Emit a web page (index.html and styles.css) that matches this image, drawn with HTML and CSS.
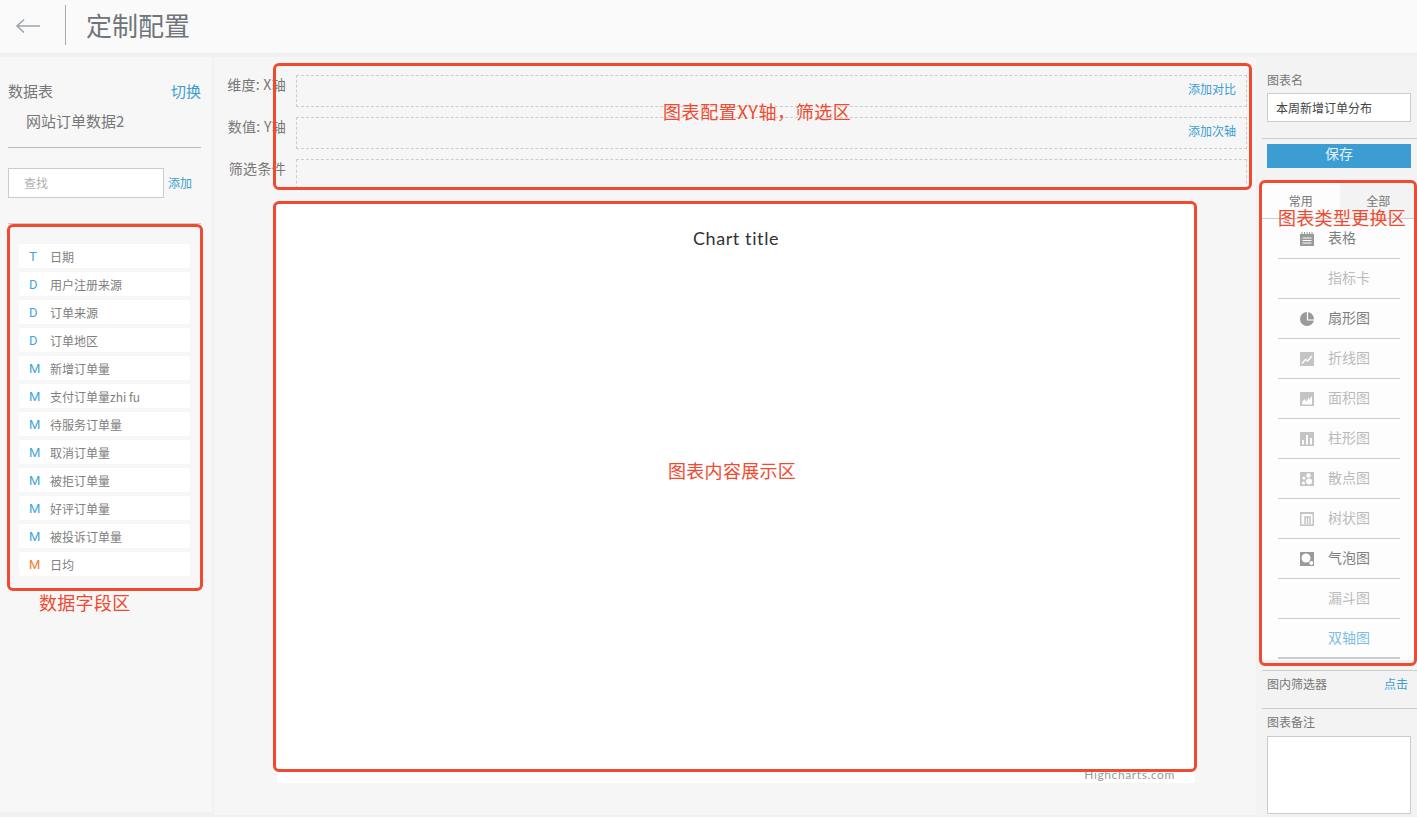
FILE: index.html
```html
<!DOCTYPE html>
<html lang="zh">
<head>
  <meta charset="utf-8">
  <title>定制配置</title>
  <link rel="stylesheet" href="styles.css">
</head>
<body>
  <header class="top-bar">
    <svg class="back-icon" width="26" height="16" viewBox="0 0 26 16"><path d="M25 8H2M9 1.500L2 8l7 6.500" fill="none" stroke="#9ba6ac" stroke-width="1.6"/></svg>
    <div class="top-divider"></div>
    <h1 class="page-title">定制配置</h1>
  </header>

  <div class="layout">
    <aside class="left-panel">
      <div class="table-head">
        <span>数据表</span>
        <a class="link switch-link">切换</a>
      </div>
      <div class="table-name">网站订单数据2</div>
      <div class="search-row">
        <div class="search-box">查找</div>
        <a class="link add-link">添加</a>
      </div>
      <ul class="field-list">
        <li class="field-item"><span class="field-type">T</span><span>日期</span></li>
        <li class="field-item"><span class="field-type">D</span><span>用户注册来源</span></li>
        <li class="field-item"><span class="field-type">D</span><span>订单来源</span></li>
        <li class="field-item"><span class="field-type">D</span><span>订单地区</span></li>
        <li class="field-item"><span class="field-type">M</span><span>新增订单量</span></li>
        <li class="field-item"><span class="field-type">M</span><span>支付订单量zhi fu</span></li>
        <li class="field-item"><span class="field-type">M</span><span>待服务订单量</span></li>
        <li class="field-item"><span class="field-type">M</span><span>取消订单量</span></li>
        <li class="field-item"><span class="field-type">M</span><span>被拒订单量</span></li>
        <li class="field-item"><span class="field-type">M</span><span>好评订单量</span></li>
        <li class="field-item"><span class="field-type">M</span><span>被投诉订单量</span></li>
        <li class="field-item"><span class="field-type field-type--calc">M</span><span>日均</span></li>
      </ul>
    </aside>

    <main class="center-panel">
      <div class="axis-row">
        <label class="axis-label">维度: X轴</label>
        <div class="drop-box"><a class="link drop-link">添加对比</a></div>
      </div>
      <div class="axis-row">
        <label class="axis-label">数值: Y轴</label>
        <div class="drop-box"><a class="link drop-link">添加次轴</a></div>
      </div>
      <div class="axis-row">
        <label class="axis-label">筛选条件</label>
        <div class="drop-box drop-box--short"></div>
      </div>
      <section class="chart-card">
        <div class="chart-title">Chart title</div>
        <div class="chart-credit">Highcharts.com</div>
      </section>
    </main>

    <aside class="right-panel">
      <div class="name-block">
        <div class="side-label">图表名</div>
        <div class="name-input">本周新增订单分布</div>
      </div>
      <div class="save-block">
        <div class="save-btn">保存</div>
      </div>
      <section class="type-panel">
        <div class="type-tabs">
          <div class="type-tab type-tab--active">常用</div>
          <div class="type-tab">全部</div>
        </div>
        <div class="type-row type-row--on">
          <svg class="type-icon" viewBox="0 0 14 14"><path fill="#9a9a9a" d="M0 2h1.500V0h1v2h1.500V0h1v2h1.500V0h1v2h1.500V0h1v2h1.500V0h1v2H14v12H0z"/><path stroke="#fff" d="M2.500 6h9M2.500 8.500h9M2.500 11h9"/></svg>
          <span class="type-name">表格</span>
        </div>
        <div class="type-row"><span class="type-icon"></span><span class="type-name">指标卡</span></div>
        <div class="type-row type-row--on">
          <svg class="type-icon" viewBox="0 0 14 14"><circle cx="7" cy="7" r="7" fill="#9a9a9a"/><path fill="none" stroke="#fff" stroke-width="1.2" d="M7.500 0v8H14"/></svg>
          <span class="type-name">扇形图</span>
        </div>
        <div class="type-row">
          <svg class="type-icon" viewBox="0 0 14 14"><path fill="#c4c4c4" d="M0 0h14v14H0z"/><path fill="none" stroke="#fff" stroke-width="1.500" d="M2 11.500l3.500-4 2 1.500L12 4"/></svg>
          <span class="type-name">折线图</span>
        </div>
        <div class="type-row">
          <svg class="type-icon" viewBox="0 0 14 14"><path fill="#c4c4c4" d="M0 0h14v14H0z"/><path fill="#fff" d="M2 12.500V10l2.500-3 2 2.500L9 5v3l3-4v8.500z"/></svg>
          <span class="type-name">面积图</span>
        </div>
        <div class="type-row">
          <svg class="type-icon" viewBox="0 0 14 14"><path fill="#c4c4c4" d="M0 0h14v14H0z"/><path fill="#fff" d="M2 8h2v4.500H2zM6 3h2v9.500H6zM10 6h2v6.500h-2z"/></svg>
          <span class="type-name">柱形图</span>
        </div>
        <div class="type-row">
          <svg class="type-icon" viewBox="0 0 14 14"><path fill="#c4c4c4" d="M0 0h14v14H0z"/><circle cx="8.500" cy="3.500" r="2.200" fill="#fff"/><circle cx="4" cy="6" r="1.600" fill="#fff"/><circle cx="9" cy="9.500" r="3" fill="#fff"/><circle cx="3.500" cy="11" r="1.500" fill="#fff"/></svg>
          <span class="type-name">散点图</span>
        </div>
        <div class="type-row">
          <svg class="type-icon" viewBox="0 0 14 14"><path fill="#c4c4c4" d="M0 0h14v14H0z"/><path fill="#fff" d="M1.500 2h11v10.500h-11z"/><path fill="none" stroke="#c4c4c4" stroke-width="1.500" d="M5 12.500V5h5v7.500M7.500 5v7.500"/></svg>
          <span class="type-name">树状图</span>
        </div>
        <div class="type-row type-row--on">
          <svg class="type-icon" viewBox="0 0 14 14"><path fill="#9a9a9a" d="M0 0h14v14H0z"/><circle cx="6" cy="6" r="4.500" fill="#fff"/><circle cx="11.300" cy="11" r="2" fill="#fff"/></svg>
          <span class="type-name">气泡图</span>
        </div>
        <div class="type-row"><span class="type-icon"></span><span class="type-name">漏斗图</span></div>
        <div class="type-row type-row--link type-row--last"><span class="type-icon"></span><span class="type-name">双轴图</span></div>
      </section>
      <div class="filter-row">
        <span class="side-label">图内筛选器</span>
        <a class="link filter-link">点击</a>
      </div>
      <div class="note-block">
        <div class="side-label">图表备注</div>
        <div class="note-box"></div>
      </div>
    </aside>
  </div>

  <!-- red annotations drawn on top of the screenshot -->
  <div class="mark mark--axis"></div>
  <div class="mark mark--chart"></div>
  <div class="mark mark--fields"></div>
  <div class="mark mark--types"></div>
  <div class="mark-text mark-text--axis">图表配置XY轴，筛选区</div>
  <div class="mark-text mark-text--chart">图表内容展示区</div>
  <div class="mark-text mark-text--fields">数据字段区</div>
  <div class="mark-text mark-text--types">图表类型更换区</div>
</body>
</html>
```

FILE: styles.css
```css
* {
    box-sizing: border-box;
}

html, body {
    margin: 0;
    height: 817px;
    overflow: hidden;
}

body {
    position: relative;
    background: #f1f1f1;
    font-family: "Noto Sans CJK SC", "Noto Sans", sans-serif;
    color: #777;
    font-size: 12px;
}

.link {
    color: #3c9dd3;
}

/* 顶部 */
.top-bar {
    display: flex;
    align-items: center;
    height: 54px;
    padding-bottom: 4px;
    background: #fafafa;
    border-bottom: 1px solid #eee;
}

.back-icon {
    margin-left: 15px;
    margin-top: 2px;
}

.top-divider {
    width: 1px;
    height: 40px;
    margin-left: 24px;
    background: #aaa;
}

.page-title {
    margin: 0 0 0 20px;
    font-size: 26px;
    line-height: 40px;
    font-weight: 400;
    color: #70757a;
}

.layout {
    display: flex;
    height: 758px;
    margin-top: 3px;
}

/* 左侧 */
.left-panel {
    width: 212px;
    height: 755px;
    padding: 24px 11px 0 8px;
    background: #f7f7f7;
}

.table-head {
    display: flex;
    justify-content: space-between;
    height: 20px;
    font-size: 15px;
    line-height: 20px;
}

.table-name {
    margin-top: 1px;
    padding: 9px 0 16px 18px;
    font-size: 15px;
    line-height: 20px;
    border-bottom: 1px solid #bbb;
}

.search-row {
    display: flex;
    align-items: center;
    margin-top: 20px;
    padding-bottom: 25px;
    border-bottom: 1px solid #ccc;
}

.search-box {
    width: 156px;
    height: 30px;
    padding-left: 15px;
    background: #fff;
    border: 1px solid #ccc;
    line-height: 27px;
    color: #b0b0b0;
}

.add-link {
    margin-left: 4px;
    margin-top: -2px;
}

.field-list {
    margin: 20px 0 0;
    padding: 0 0 0 11px;
    list-style: none;
}

.field-item {
    display: flex;
    align-items: center;
    width: 171px;
    height: 24px;
    margin-bottom: 4px;
    background: #fff;
    border-radius: 3px;
    color: #808080;
}

.field-type {
    width: 31px;
    padding-left: 10px;
    font-family: "Roboto", sans-serif;
    font-size: 13px;
    color: #3fa5e0;
}

.field-type--calc {
    color: #f47b30;
}

/* 中间 */
.center-panel {
    width: 1042px;
    margin-left: 2px;
    padding-top: 18px;
    background: #f6f6f6;
}

.axis-row {
    display: flex;
    margin-bottom: 10px;
}

.axis-label {
    width: 72px;
    margin-top: -1px;
    font-size: 14px;
    line-height: 20px;
    letter-spacing: 0.3px;
    text-align: right;
    white-space: nowrap;
}

.drop-box {
    display: flex;
    justify-content: flex-end;
    width: 951px;
    height: 32px;
    margin-left: 10px;
    padding: 4px 10px 0 0;
    border: 1px dashed #ccc;
}

.drop-box--short {
    height: 30px;
}

.drop-link {
    line-height: 17px;
}

.chart-card {
    position: relative;
    width: 918px;
    height: 579px;
    margin: 15px 0 0 63px;
    background: #fff;
}

.chart-title {
    padding-top: 20px;
    font-family: "Lato", sans-serif;
    font-size: 18px;
    line-height: 28px;
    text-align: center;
    color: #333;
    letter-spacing: 0.6px;
}

.chart-credit {
    position: absolute;
    right: 20px;
    bottom: 0;
    font-family: "Lato", sans-serif;
    font-size: 12px;
    line-height: 16px;
    letter-spacing: 0.6px;
    color: #999;
}

/* 右侧 */
.right-panel {
    width: 160px;
    margin-left: 1px;
    background: #f3f3f3;
}

.side-label {
    line-height: 18px;
}

.name-block {
    height: 82px;
    margin-left: 5px;
    padding: 14px 6px 0 5px;
    border-bottom: 1px solid #ccc;
}

.name-input {
    height: 29px;
    margin-top: 4px;
    padding-left: 8px;
    background: #fff;
    border: 1px solid #ccc;
    line-height: 28px;
    color: #444;
}

.save-block {
    height: 44px;
    padding: 5px 6px 0 10px;
}

.save-btn {
    height: 24px;
    background: #3c9dd3;
    color: #e6f2fa;
    font-size: 14px;
    line-height: 18px;
    text-align: center;
}

.type-panel {
    width: 155px;
    height: 477px;
    margin-left: 5px;
    background: #fdfdfd;
}

.type-tabs {
    display: flex;
    height: 36px;
    border-bottom: 1px solid #ccc;
}

.type-tab {
    flex: 1;
    padding-top: 11px;
    line-height: 14px;
    text-align: center;
    background: #f3f3f3;
    color: #777;
}

.type-tab--active {
    background: #fdfdfd;
}

.type-row {
    display: flex;
    align-items: center;
    width: 122px;
    height: 40px;
    margin-left: 16px;
    padding-left: 22px;
    border-bottom: 1px solid #ccc;
    font-size: 14px;
    color: #bbb;
}

.type-row--on {
    color: #808080;
}

.type-row--link {
    color: #7fbde2;
}

.type-row--last {
    border-bottom: 2px solid #ccc;
}

.type-row--last .type-name {
    margin-top: -2px;
}

.type-icon {
    display: block;
    width: 14px;
    height: 14px;
    margin-top: 1px;
    margin-right: 14px;
    flex: none;
}

.type-name {
    margin-top: -4px;
}

.filter-row {
    display: flex;
    justify-content: space-between;
    height: 39px;
    margin: 10px 0 0 5px;
    padding: 4px 9px 0 5px;
    border-top: 1px solid #ccc;
    border-bottom: 1px solid #ccc;
    line-height: 18px;
}

.note-block {
    margin-left: 5px;
    padding: 4px 6px 0 5px;
}

.note-box {
    height: 78px;
    margin-top: 5px;
    background: #fff;
    border: 1px solid #ccc;
}

/* 标注 */
.mark {
    position: absolute;
    border: 3px solid #f04a30;
    border-radius: 6px;
}

.mark--axis {
    left: 273px;
    top: 63px;
    width: 979px;
    height: 127px;
}

.mark--chart {
    left: 273px;
    top: 201px;
    width: 924px;
    height: 571px;
}

.mark--fields {
    left: 7px;
    top: 224px;
    width: 196px;
    height: 367px;
}

.mark--types {
    left: 1259px;
    top: 180px;
    width: 158px;
    height: 486px;
}

.mark-text {
    position: absolute;
    font-size: 18px;
    line-height: 18px;
    letter-spacing: 0.3px;
    color: #f04a30;
    white-space: nowrap;
}

.mark-text--axis {
    left: 663px;
    top: 102px;
    letter-spacing: 0.6px;
}

.mark-text--chart {
    left: 668px;
    top: 461px;
}

.mark-text--fields {
    left: 39px;
    top: 593px;
}

.mark-text--types {
    left: 1278px;
    top: 208px;
}
```
